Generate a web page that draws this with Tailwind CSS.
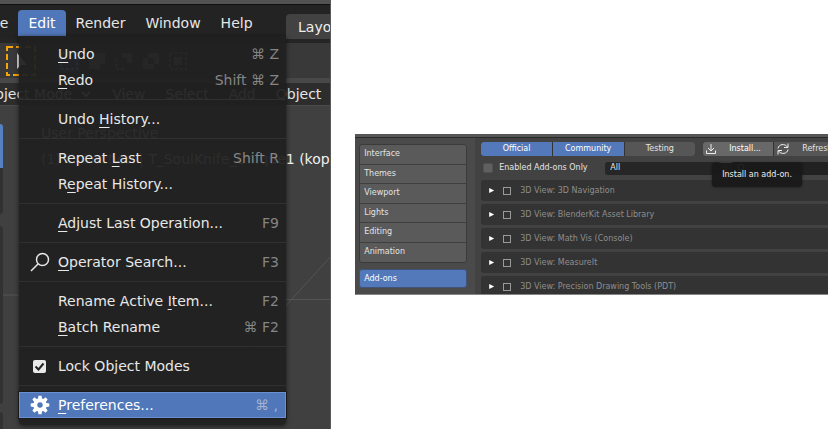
<!DOCTYPE html>
<html lang="en">
<head>
<meta charset="utf-8">
<title>Blender preferences</title>
<script src="https://cdn.jsdelivr.net/npm/@tailwindcss/browser@4"></script>
</head>
<body class="bg-white font-['DejaVu_Sans',sans-serif] overflow-hidden">
<main class="flex items-start h-screen">

  <section class="relative w-2/5 shrink-0 h-full flex flex-col overflow-hidden bg-[#404040] text-[14px] leading-[26px] text-[#e6e6e6] whitespace-nowrap border-r border-[#5a5a5a]">
    <div class="h-1 shrink-0 bg-[#525252]"></div>
    <header class="h-[35px] shrink-0 flex items-end bg-[#232323] border-t border-[#111]">
      <nav class="flex pb-[3px] -ml-[25px]" aria-label="Main menu">
        <button class="px-[10px] text-right">File</button>
        <button class="px-[10px] rounded-t bg-[#5077b9] text-white" aria-expanded="true">Edit</button>
        <button class="px-[10px]">Render</button>
        <button class="px-[10px]">Window</button>
        <button class="px-[10px]">Help</button>
      </nav>
      <button class="absolute left-[286px] top-[14px] h-[25px] pl-3 pr-4 rounded-t bg-[#424242] text-[#eee]">Layout</button>
    </header>
    <div class="h-1 shrink-0 bg-[#252525]"></div>

    <div class="h-[35px] shrink-0 flex items-center gap-[7px] pl-[6px] bg-[#393939]">
      <svg class="w-[30px] h-[30px] shrink-0 mr-[15px]" viewBox="0 0 30 30"><rect x="1" y="1" width="28" height="28" fill="none" stroke="#f5a50a" stroke-width="2" stroke-dasharray="6 3"/><path d="M11 7v16l4-4h6z" fill="#ddd"/></svg>
      <svg class="w-[22px] h-[22px] shrink-0" viewBox="0 0 22 22"><rect width="22" height="22" rx="2" fill="#3d5f92"/><rect x="3" y="3" width="16" height="16" fill="none" stroke="#aaccff" stroke-width="2" stroke-dasharray="3 2"/></svg>
      <svg class="w-[20px] h-[20px] shrink-0" viewBox="0 0 20 20"><path d="M7 2h11v11h-5v5H2V7h5z" fill="#888"/></svg>
      <svg class="w-[20px] h-[20px] shrink-0" viewBox="0 0 20 20"><path d="M8 2h10v10h-5V7H8z" fill="#888"/><path d="M2 8v10h10" fill="none" stroke="#888" stroke-width="2" stroke-dasharray="3 2"/></svg>
      <svg class="w-[20px] h-[20px] shrink-0" viewBox="0 0 20 20"><path fill-rule="evenodd" d="M7 2h11v11h-5v5H2V7h5zM7 7v6h6V7z" fill="#888"/></svg>
      <svg class="w-[20px] h-[20px] shrink-0" viewBox="0 0 20 20"><rect x="2" y="2" width="16" height="16" fill="none" stroke="#888" stroke-width="2" stroke-dasharray="3 2"/><rect x="6" y="6" width="8" height="8" fill="#888"/></svg>
    </div>
    <div class="h-[5px] shrink-0 bg-[#484848]"></div>
    <div class="h-[22px] shrink-0 flex items-center gap-[20px] bg-[#2d2d2d]">
      <button class="-ml-[16px] flex items-center gap-2">Object Mode <svg class="w-3 h-3" viewBox="0 0 12 12" fill="none" stroke="#ccc" stroke-width="2"><path d="M2 4l4 4 4-4"/></svg></button>
      <button>View</button><button>Select</button><button>Add</button><button>Object</button>
    </div>

    <div class="relative grow bg-[#404040] border-t border-[#4b4b4b]">
      <svg class="absolute inset-0 w-full h-full" fill="none" stroke="#545454" stroke-width="1"><path d="M0 189H140M240 193.500H332M180 316L332 149"/></svg>
      <div class="absolute left-0 top-[18px] w-[3px] flex flex-col">
        <div class="h-[44px] rounded-tr bg-[#5680c2]"></div>
        <div class="h-[46px] rounded-br bg-[#313131]"></div>
        <div class="h-[178px] mt-3 rounded-r bg-[#323232]"></div>
        <div class="h-10 mt-2 rounded-tr bg-[#323232]"></div>
      </div>
      <div class="pl-[41px] pt-[14px] text-[#f0f0f0]">
        <p>User Perspective</p>
        <p>(1) Collection | T_SoulKnife_Unique1 (kopie)</p>
      </div>
    </div>

    <div role="menu" aria-label="Edit" class="absolute left-[19px] top-[36px] w-[267px] pt-[5px] pb-[7px] bg-[#202020]/94 rounded-b shadow-[0_1px_5px_rgba(0,0,0,0.6)] text-[#e8e8e8] [&_button]:flex [&_button]:w-full [&_button]:h-[26px] [&_button]:items-center [&_button]:pl-[39px] [&_button]:pr-[7px] [&_u]:underline-offset-[3px] [&_u]:decoration-1 [&_kbd]:ml-auto [&_kbd]:font-['DejaVu_Sans',sans-serif] [&_kbd]:text-[#858585] [&_hr]:my-[6px] [&_hr]:border-[#303030]">
      <button role="menuitem"><span><u>U</u>ndo</span><kbd>⌘ Z</kbd></button>
      <button role="menuitem"><span><u>R</u>edo</span><kbd>Shift ⌘ Z</kbd></button>
      <hr>
      <button role="menuitem"><span>Undo <u>H</u>istory...</span></button>
      <hr>
      <button role="menuitem"><span>Repeat <u>L</u>ast</span><kbd>Shift R</kbd></button>
      <button role="menuitem"><span>R<u>e</u>peat History...</span></button>
      <hr>
      <button role="menuitem"><span><u>A</u>djust Last Operation...</span><kbd>F9</kbd></button>
      <hr>
      <button role="menuitem" class="relative"><svg class="absolute left-[11px] top-[3px] w-5 h-5" viewBox="0 0 20 20" fill="none" stroke="#e8e8e8" stroke-width="1.500"><circle cx="12.500" cy="7.500" r="6"/><path d="M8.200 11.800L1 19"/></svg><span><u>O</u>perator Search...</span><kbd>F3</kbd></button>
      <hr>
      <button role="menuitem"><span>Rename Active <u>I</u>tem...</span><kbd>F2</kbd></button>
      <button role="menuitem"><span><u>B</u>atch Rename</span><kbd>⌘ F2</kbd></button>
      <hr>
      <div class="relative flex items-center h-[26px]">
        <input id="lock" type="checkbox" checked class="appearance-none absolute left-[14px] w-[13px] h-[13px] rounded-[2px] bg-[#e9e9e9]">
        <svg class="absolute left-[14px] w-[13px] h-[13px] pointer-events-none" viewBox="0 0 13 13" fill="none" stroke="#222" stroke-width="2"><path d="M2.500 6.500l3 3 5-6"/></svg>
        <label for="lock" class="pl-[39px]">Lock Object Modes</label>
      </div>
      <hr>
      <button role="menuitem" class="relative bg-[#5077b9] border border-[#6a90d0] outline outline-[#1a1a1a] text-white">
        <svg class="absolute left-[10px] top-[2px] w-5 h-5" viewBox="-10 -10 20 20"><g fill="#fff"><path id="t" d="M-2.200 -5L-1.500 -9.300H1.500L2.200 -5z"/><use href="#t" transform="rotate(45)"/><use href="#t" transform="rotate(90)"/><use href="#t" transform="rotate(135)"/><use href="#t" transform="rotate(180)"/><use href="#t" transform="rotate(225)"/><use href="#t" transform="rotate(270)"/><use href="#t" transform="rotate(315)"/></g><circle r="4.700" fill="none" stroke="#fff" stroke-width="4"/></svg>
        <span class="-ml-px"><u>P</u>references...</span><kbd class="text-[#a3b3d0]!">⌘ ,</kbd></button>
    </div>
  </section>

  <section class="relative grow min-w-0 ml-6 mt-[134px] h-[161px] overflow-hidden bg-[#464646] border-b border-[#858585] text-[8px] leading-[10px] text-[#e4e4e4] whitespace-nowrap">
    <div class="h-1 bg-[#565656] border-b border-[#2a2a2a]"></div>
    <div class="flex h-full">
      <nav class="w-[120px] shrink-0 pl-[4px] pt-[6px] bg-[#4a4a4a]" aria-label="Preferences sections">
        <div class="grid grid-rows-6 w-[108px] h-[119px] rounded-[3px] overflow-hidden bg-[#5a5a5a] border border-[#3b3b3b] divide-y divide-[#3f3f3f] [&_button]:text-left [&_button]:pl-1">
          <button>Interface</button><button>Themes</button><button>Viewport</button><button>Lights</button><button>Editing</button><button>Animation</button>
        </div>
        <button class="mt-[6px] w-[108px] h-[19px] pl-1 text-left rounded-[3px] bg-[#5379ba] border border-[#40547a] text-white">Add-ons</button>
      </nav>
      <div class="grow min-w-0 pl-[6px] pt-1 overflow-hidden bg-[#424242]">
        <div class="flex h-[14px]">
          <div class="flex gap-px w-[214px] shrink-0 rounded-[3px] overflow-hidden bg-[#333] [&_button]:flex-1">
            <button class="bg-[#5379ba] text-white">Official</button><button class="bg-[#5379ba] text-white">Community</button><button class="bg-[#565656]">Testing</button>
          </div>
          <div class="flex gap-px w-[142px] shrink-0 ml-2 rounded-[3px] overflow-hidden bg-[#333]">
            <button class="flex items-center w-[70px] pl-[3px] gap-[13px] bg-[#686868] text-white"><svg class="w-[10px] h-[10px]" viewBox="0 0 10 10" fill="none" stroke="#eee"><path d="M5 0v7M2 4l3 3 3-3M.500 6.500v3h9v-3"/></svg>Install...</button>
            <button class="flex items-center grow pl-[3px] gap-[13px] bg-[#565656]"><svg class="w-3 h-3 shrink-0" viewBox="0 0 12 12" fill="none" stroke="#eee"><path d="M1 5.500C1.500 1 8 .200 10.500 4M11 .500v4H7M11 6.500C10.500 11 4 11.800 1.500 8M1 11.500v-4h4"/></svg>Refresh</button>
          </div>
        </div>
        <div class="flex items-center h-[14px] mt-[5px] pl-[2px]">
          <input id="en" type="checkbox" class="appearance-none w-[10px] h-[10px] shrink-0 rounded-[2px] bg-[#606060] border border-[#505050]">
          <label for="en" class="w-[112px] shrink-0 pl-[6px]">Enabled Add-ons Only</label>
          <select aria-label="Category" class="appearance-none w-[116px] h-[13px] shrink-0 pl-[5px] rounded-[3px] bg-[#262626]"><option>All</option></select>
          <div class="flex items-center h-[13px] ml-[10px] grow bg-[#212121] rounded-l-[3px]">
            <svg class="w-[10px] h-[10px] shrink-0 ml-1" viewBox="0 0 10 10" fill="none" stroke="#bbb"><circle cx="6" cy="4" r="3"/><path d="M4 6L.500 9.500"/></svg>
            <input type="text" aria-label="Search add-ons" class="w-full min-w-0 h-[12px]">
          </div>
        </div>
        <ul class="mt-[5px] flex flex-col gap-[3px] text-[#8e8e8e] [&_li]:flex [&_li]:items-center [&_li]:h-[21px] [&_li]:pl-[8px] [&_li]:bg-[#333] [&_li]:rounded-l-[3px] [&_button]:w-[5px] [&_button]:h-[5px] [&_button]:bg-white [&_button]:[clip-path:polygon(0_0,100%_50%,0_100%)] [&_input]:appearance-none [&_input]:w-2 [&_input]:h-2 [&_input]:ml-[9px] [&_input]:mr-[9px] [&_input]:border [&_input]:border-[#9a9a9a]">
          <li><button aria-label="Expand"></button><input id="a1" type="checkbox"><label for="a1">3D View: 3D Navigation</label></li>
          <li><button aria-label="Expand"></button><input id="a2" type="checkbox"><label for="a2">3D View: BlenderKit Asset Library</label></li>
          <li><button aria-label="Expand"></button><input id="a3" type="checkbox"><label for="a3">3D View: Math Vis (Console)</label></li>
          <li><button aria-label="Expand"></button><input id="a4" type="checkbox"><label for="a4">3D View: MeasureIt</label></li>
          <li><button aria-label="Expand"></button><input id="a5" type="checkbox"><label for="a5">3D View: Precision Drawing Tools (PDT)</label></li>
        </ul>
      </div>
    </div>
    <div role="tooltip" class="absolute left-[357px] top-[29px] px-[10px] py-[7px] rounded-[3px] bg-[#191919]/93 shadow-[0_0_3px_rgba(0,0,0,0.5)] text-[#eee]">Install an add-on.</div>
  </section>
</main>
</body>
</html>
